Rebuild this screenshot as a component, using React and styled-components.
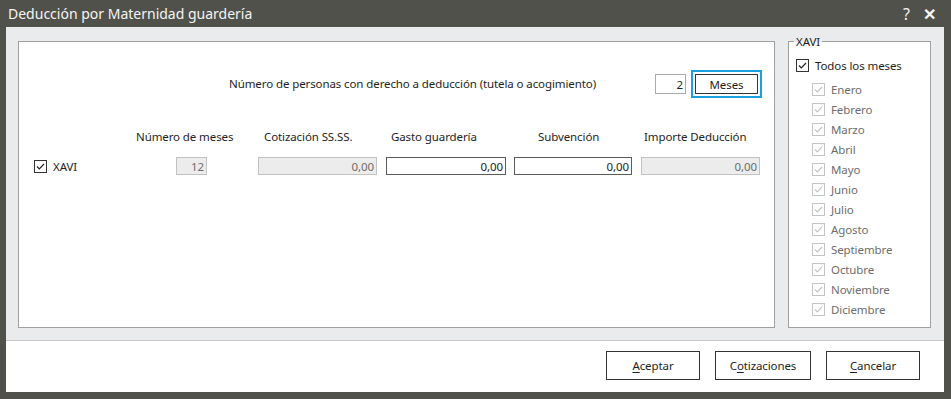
import React from "react";
import styled, { createGlobalStyle } from "styled-components";

const Global = createGlobalStyle`
  html, body { margin: 0; padding: 0; background: #50514a; }
  body {
    font-family: "Noto Sans", "Open Sans", Arial, sans-serif;
    font-size: 11.5px;
    letter-spacing: -0.1px;
    color: #1e1e1e;
  }
  * { box-sizing: border-box; }
`;

const Window = styled.div`
  width: 951px;
  height: 399px;
  background: #50514a;
  display: flex;
  flex-direction: column;
  padding: 0 7px 7px 6px;
`;

const TitleBar = styled.div`
  height: 27px;
  display: flex;
  align-items: center;
  justify-content: space-between;
  padding: 0 8px 0 2px;
  color: #f4f4f4;
  font-size: 14px;
  letter-spacing: 0;
`;

const TitleIcons = styled.div`
  display: flex;
  gap: 13px;
  align-items: center;
  font-size: 16px;
`;

const Close = styled.span`
  font-weight: 700;
`;

const Body = styled.div`
  flex: 1;
  display: flex;
  flex-direction: column;
`;

const Top = styled.div`
  flex: 1;
  background: #eaebed;
  display: flex;
  gap: 13px;
  padding: 14px 13px 12px 12px;
  border-bottom: 1px solid #c9c9c9;
`;

const Panel = styled.div`
  width: 757px;
  background: #fff;
  border: 1px solid #a0a0a0;
  padding: 28px 12px 0 15px;
`;

const PersonsRow = styled.div`
  display: flex;
  align-items: center;
  justify-content: flex-end;
  height: 28px;
`;

const PersonsLabel = styled.span`
  margin-right: 59px;
  margin-top: -2px;
`;

const SmallInput = styled.div`
  width: 31px;
  height: 20px;
  border: 1px solid #ababab;
  background: #fff;
  display: flex;
  align-items: center;
  justify-content: flex-end;
  padding-right: 2px;
`;

const FocusButton = styled.div`
  margin-left: 5px;
  width: 71px;
  height: 28px;
  border: 2px solid #1a9fe0;
  padding: 2px;
  display: flex;
`;

const InnerButton = styled.div`
  flex: 1;
  border: 1px solid #333;
  display: flex;
  align-items: center;
  justify-content: center;
`;

const Grid = styled.div`
  margin-top: 30px;
  display: grid;
  grid-template-columns: 102px 114px 133px 127px 128px 122px;
  row-gap: 11px;
`;

const Header = styled.div`
  padding-left: ${p => p.$x}px;
  white-space: nowrap;
  height: 18px;
  line-height: 18px;
`;

const Field = styled.div`
  margin-left: ${p => p.$x}px;
  width: ${p => p.$w}px;
  height: 18px;
  border: 1px solid ${p => (p.$disabled ? "#c2c2c2" : "#5a5a5a")};
  background: ${p => (p.$disabled ? "#ececec" : "#fff")};
  color: ${p => (p.$disabled ? "#6d6d6d" : "#1e1e1e")};
  display: flex;
  align-items: center;
  justify-content: flex-end;
  padding-right: 2px;
`;

const CheckRow = styled.label`
  display: flex;
  align-items: center;
  gap: ${p => p.$gap || 6}px;
  height: ${p => p.$h || 20}px;
  color: ${p => (p.$disabled ? "#6d6d6d" : "#1e1e1e")};
  padding-left: ${p => p.$indent || 0}px;
`;

const Box = styled.span`
  width: 13px;
  height: 13px;
  border: 1px solid ${p => (p.$disabled ? "#c4c4c4" : "#333")};
  background: #fff;
  display: inline-flex;
  align-items: center;
  justify-content: center;
`;

const GroupBox = styled.div`
  position: relative;
  width: 143px;
  background: #fff;
  border: 1px solid #a0a0a0;
  padding: 13px 0 0 7px;
`;

const Legend = styled.span`
  position: absolute;
  top: -8px;
  left: 5px;
  padding: 0 2px;
  background: linear-gradient(#eaebed 50%, #fff 50%);
  line-height: 15px;
`;

const Months = styled.div`
  margin-top: 4px;
`;

const Footer = styled.div`
  height: 51px;
  background: #fff;
  display: flex;
  justify-content: flex-end;
  align-items: flex-start;
  gap: 15px;
  padding: 10px 24px 0 0;
`;

const Button = styled.div`
  width: ${p => p.$w || 94}px;
  height: 29px;
  border: 1px solid #333;
  background: #fff;
  display: flex;
  align-items: center;
  justify-content: center;
  u { text-decoration: underline; text-underline-offset: 2px; }
`;

function Check({ disabled }) {
  const c = disabled ? "#c4c4c4" : "#222";
  return (
    <Box $disabled={disabled}>
      <svg width="9" height="9" viewBox="0 0 9 9">
        <polyline points="1,4.5 3.3,6.8 8,2" fill="none" stroke={c} strokeWidth="1.2" />
      </svg>
    </Box>
  );
}

const months = ["Enero", "Febrero", "Marzo", "Abril", "Mayo", "Junio", "Julio", "Agosto", "Septiembre", "Octubre", "Noviembre", "Diciembre"];

export default function App() {
  return (
    <Window>
      <Global />
      <TitleBar>
        <span>Deducción por Maternidad guardería</span>
        <TitleIcons>
          <span>?</span>
          <Close>✕</Close>
        </TitleIcons>
      </TitleBar>
      <Body>
        <Top>
          <Panel>
            <PersonsRow>
              <PersonsLabel>Número de personas con derecho a deducción (tutela o acogimiento)</PersonsLabel>
              <SmallInput>2</SmallInput>
              <FocusButton>
                <InnerButton>Meses</InnerButton>
              </FocusButton>
            </PersonsRow>
            <Grid>
              <div />
              <Header $x={0}>Número de meses</Header>
              <Header $x={14}>Cotización SS.SS.</Header>
              <Header $x={8}>Gasto guardería</Header>
              <Header $x={28}>Subvención</Header>
              <Header $x={6}>Importe Deducción</Header>

              <CheckRow $h={18}>
                <Check />
                XAVI
              </CheckRow>
              <Field $x={40} $w={31} $disabled>12</Field>
              <Field $x={8} $w={119} $disabled>0,00</Field>
              <Field $x={3} $w={120}>0,00</Field>
              <Field $x={4} $w={118}>0,00</Field>
              <Field $x={3} $w={119} $disabled>0,00</Field>
            </Grid>
          </Panel>
          <GroupBox>
            <Legend>XAVI</Legend>
            <CheckRow $gap={6}>
              <Check />
              Todos los meses
            </CheckRow>
            <Months>
              {months.map(m => (
                <CheckRow key={m} $disabled $indent={16}>
                  <Check disabled />
                  {m}
                </CheckRow>
              ))}
            </Months>
          </GroupBox>
        </Top>
        <Footer>
          <Button><span><u>A</u>ceptar</span></Button>
          <Button $w={96}><span>C<u>o</u>tizaciones</span></Button>
          <Button><span><u>C</u>ancelar</span></Button>
        </Footer>
      </Body>
    </Window>
  );
}
